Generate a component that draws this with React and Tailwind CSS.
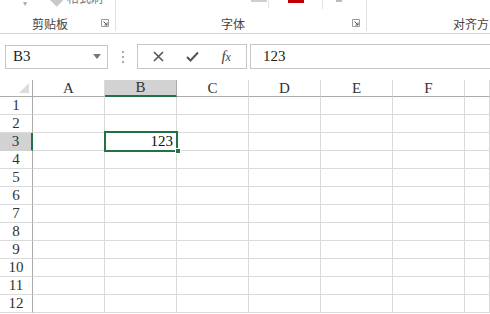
import React from 'react'

const cols = ['A', 'B', 'C', 'D', 'E', 'F', '']
const rows = [1, 2, 3, 4, 5, 6, 7, 8, 9, 10, 11, 12]

const cell = { fontFamily: '"Liberation Serif", "DejaVu Serif", serif' }
const cjk = { fontFamily: '"Noto Sans CJK SC", "Noto Sans", sans-serif' }

function Launcher() {
  return (
    <svg width="8" height="8" viewBox="0 0 8 8" className="absolute right-[6px] bottom-[4px]">
      <path d="M0.5 0.5H7.5V7.5H0.5Z" fill="none" stroke="#9a9a9a" strokeWidth="1" />
      <path d="M2.5 2.5L6 6M6 3.5V6H3.5" fill="none" stroke="#555" strokeWidth="1" />
    </svg>
  )
}

function Ribbon() {
  return (
    <div className="flex h-[34px] border-b border-[#d5d5d5] bg-white text-[12px] text-[#444]" style={cjk}>
      <div className="relative w-[116px] border-r border-[#e1e1e1] h-[31px]">
        <div className="absolute left-[23px] top-[-3px] text-[8px] text-[#aaa]">▾</div>
        <div className="absolute left-[50px] top-[-6px] w-[12px] h-[10px] rotate-45 bg-[#c8c8c8]"></div>
        <div className="absolute left-[67px] top-[-11px] text-[12px] text-[#777]">格式刷</div>
        <div className="absolute left-[32px] top-[15px]">剪贴板</div>
        <Launcher />
      </div>
      <div className="relative w-[251px] border-r border-[#e1e1e1] h-[31px]">
        <div className="absolute left-[135px] top-0 w-[16px] h-[2px] bg-[#cfcfcf]"></div>
        <div className="absolute left-[152px] top-0 w-px h-[8px] bg-[#e3e3e3]"></div>
        <div className="absolute left-[172px] top-0 w-[16px] h-[3px] bg-[#c00000]"></div>
        <div className="absolute left-[206px] top-0 w-px h-[9px] bg-[#e3e3e3]"></div>
        <div className="absolute left-[220px] top-0 w-[6px] h-[2px] bg-[#bbb]"></div>
        <div className="absolute left-[105px] top-[15px]">字体</div>
        <Launcher />
      </div>
      <div className="relative flex-1">
        <div className="absolute left-[86px] top-[15px] whitespace-nowrap">对齐方</div>
      </div>
    </div>
  )
}

function FormulaBar() {
  return (
    <div className="flex items-center h-[46px] pb-[1px] bg-white">
      <div className="ml-[5px] w-[103px] h-[24px] border border-[#c6c6c6] flex items-center justify-between pl-[7px] pr-[6px]">
        <span className="text-[15px] text-[#222]" style={cell}>B3</span>
        <svg width="8" height="5" viewBox="0 0 8 5"><path d="M0 0H8L4 5Z" fill="#777" /></svg>
      </div>
      <div className="w-[29px] flex flex-col items-center gap-[3px]">
        <div className="w-[2px] h-[2px] bg-[#aaa]"></div>
        <div className="w-[2px] h-[2px] bg-[#aaa]"></div>
        <div className="w-[2px] h-[2px] bg-[#aaa]"></div>
      </div>
      <div className="w-[110px] h-[25px] border border-[#c6c6c6] flex items-center justify-around px-[4px]">
        <svg width="11" height="11" viewBox="0 0 11 11"><path d="M1 1L10 10M10 1L1 10" stroke="#555" strokeWidth="1.6" /></svg>
        <svg width="13" height="11" viewBox="0 0 13 11"><path d="M1 6L4.5 9.5L12 1.5" fill="none" stroke="#555" strokeWidth="2" /></svg>
        <span className="text-[15px] italic text-[#444]" style={{ fontFamily: '"Liberation Serif", serif' }}>f<span className="text-[12px]">x</span></span>
      </div>
      <div className="ml-[3px] flex-1 h-[25px] border border-r-0 border-[#c6c6c6] flex items-center pl-[12px]">
        <span className="text-[15px] text-[#222]" style={cell}>123</span>
      </div>
    </div>
  )
}

function Sheet() {
  return (
    <div className="relative text-[#444]" style={cell}>
      <div className="grid grid-cols-[33px_repeat(6,72px)_1fr]">
        <div className="h-[17px] border-r border-b border-[#ababab] relative">
          <svg width="10" height="10" viewBox="0 0 10 10" className="absolute right-[3px] bottom-[3px]"><path d="M10 0V10H0Z" fill="#dcdcdc" /></svg>
        </div>
        {cols.map((c, i) => (
          <div
            key={c + i}
            className={
              c === 'B'
                ? 'h-[17px] border-b-2 border-r border-b-[#217346] border-r-[#ababab] bg-[#d2d2d2] flex items-center justify-center text-[15px] text-[#333]'
                : 'h-[17px] border-b border-r border-b-[#ababab] border-r-[#dadada] flex items-center justify-center text-[15px] text-[#333]'
            }
          >
            {c}
          </div>
        ))}
        {rows.map((r) => (
          <React.Fragment key={r}>
            <div
              className={
                r === 3
                  ? 'h-[18px] border-b border-r-2 border-b-[#cfcfcf] border-r-[#217346] bg-[#d2d2d2] flex items-center justify-center text-[15px] text-[#333]'
                  : 'h-[18px] border-b border-r border-b-[#dadada] border-r-[#ababab] flex items-center justify-center text-[15px] text-[#333]'
              }
            >
              {r}
            </div>
            {cols.map((c, i) => (
              <div key={c + i} className="h-[18px] border-b border-r border-[#dadada] flex items-center justify-end pr-[3px] text-[15px] text-[#111]">
                {r === 3 && c === 'B' ? '123' : ''}
              </div>
            ))}
          </React.Fragment>
        ))}
      </div>
      <div className="absolute left-[104px] top-[51px] w-[74px] h-[21px] border-2 border-[#217346]"></div>
      <div className="absolute left-[175px] top-[68px] w-[6px] h-[6px] bg-[#217346] border border-white"></div>
    </div>
  )
}

export default function App() {
  return (
    <div className="w-[490px] h-[314px] overflow-hidden bg-white">
      <Ribbon />
      <FormulaBar />
      <Sheet />
    </div>
  )
}
